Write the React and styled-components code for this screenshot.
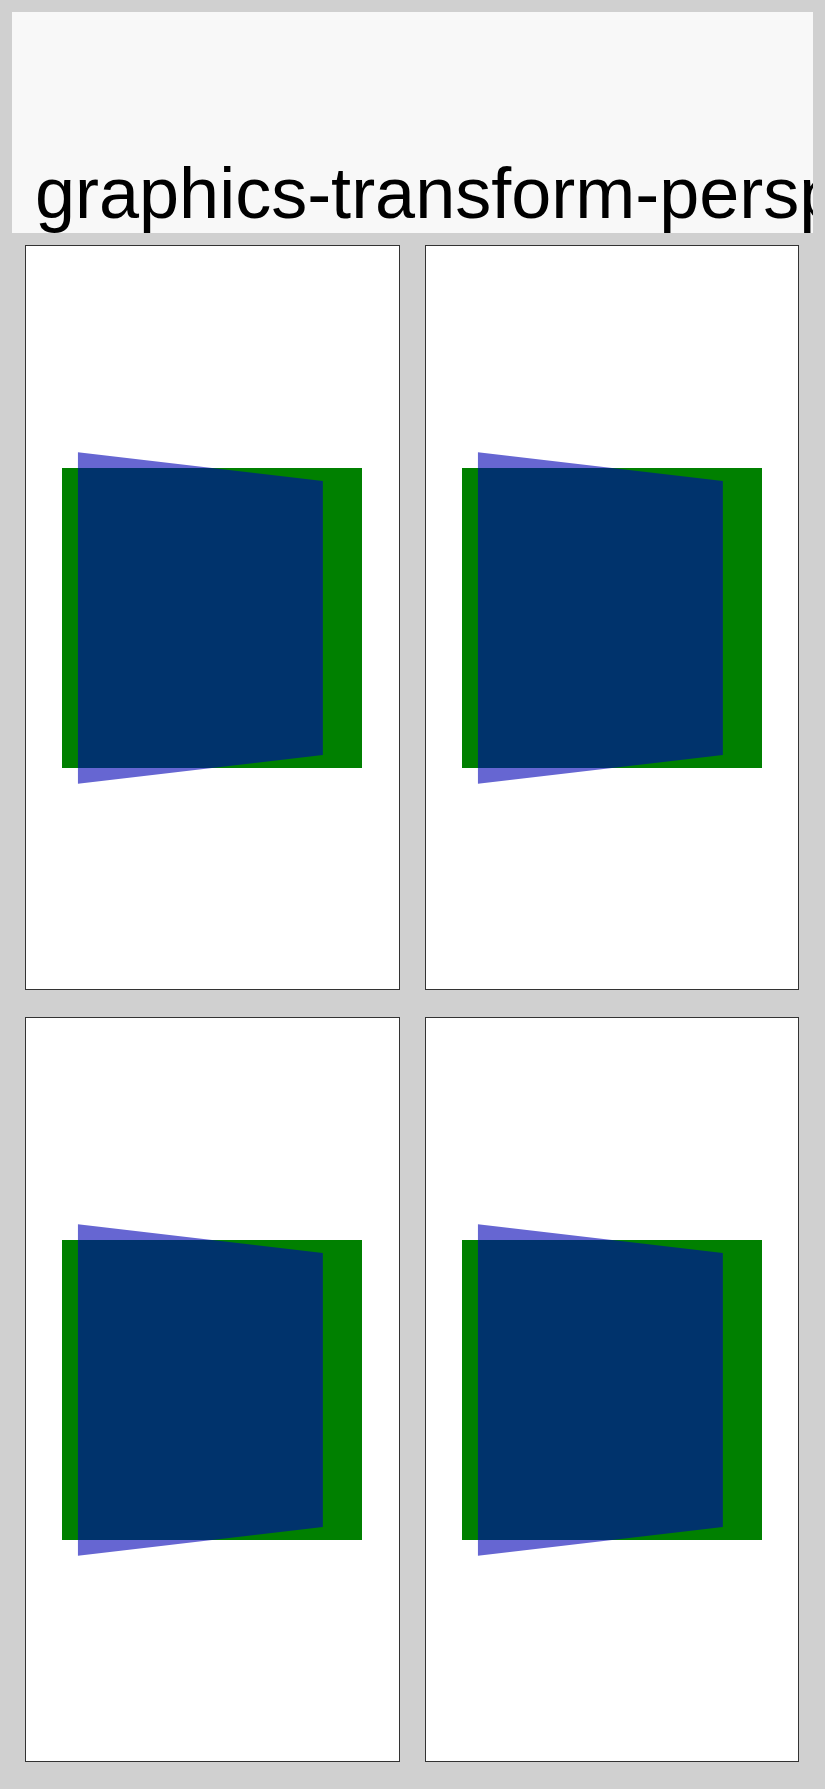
import React from "react";
import styled, { createGlobalStyle } from "styled-components";

const GlobalStyle = createGlobalStyle`
  html, body {
    margin: 0;
    padding: 0;
    background: #d0d0d0;
  }
  body {
    font-family: "Liberation Sans", Arial, sans-serif;
  }
`;

const cards = [1, 2, 3, 4];

const App = () => {
  return (
    <Page>
      <GlobalStyle />
      <Header>
        <Title>graphics-transform-perspective</Title>
      </Header>
      <Grid>
        {cards.map((id) => (
          <Card key={id}>
            <Stage>
              <GreenSquare />
              <BlueSquare />
            </Stage>
          </Card>
        ))}
      </Grid>
    </Page>
  );
};

export default App;

const Page = styled.div`
  padding: 12px;
  display: flex;
  flex-direction: column;
`;

const Header = styled.div`
  height: 221px;
  background-color: #f8f8f8;
  display: flex;
  align-items: flex-end;
  padding: 0 0 0 23px;
  overflow: hidden;
  white-space: nowrap;
`;

const Title = styled.h1`
  margin: 0;
  font-family: "Liberation Sans", Arial, sans-serif;
  font-weight: normal;
  font-size: 72px;
  line-height: 80px;
  color: #000;
`;

const Grid = styled.div`
  display: grid;
  grid-template-columns: 1fr 1fr;
  column-gap: 25px;
  row-gap: 27px;
  padding: 12px 14px 14px 13px;
`;

const Card = styled.div`
  height: 745px;
  background-color: #fff;
  border: 1px solid #333;
  box-sizing: border-box;
  display: flex;
  align-items: center;
  justify-content: center;
`;

const Stage = styled.div`
  display: grid;
  width: 300px;
  height: 300px;
`;

const GreenSquare = styled.div`
  grid-area: 1 / 1;
  background-color: #008000;
`;

const BlueSquare = styled.div`
  grid-area: 1 / 1;
  background-color: rgba(0, 0, 180, 0.6);
  transform: perspective(930px) rotateY(36deg);
`;
